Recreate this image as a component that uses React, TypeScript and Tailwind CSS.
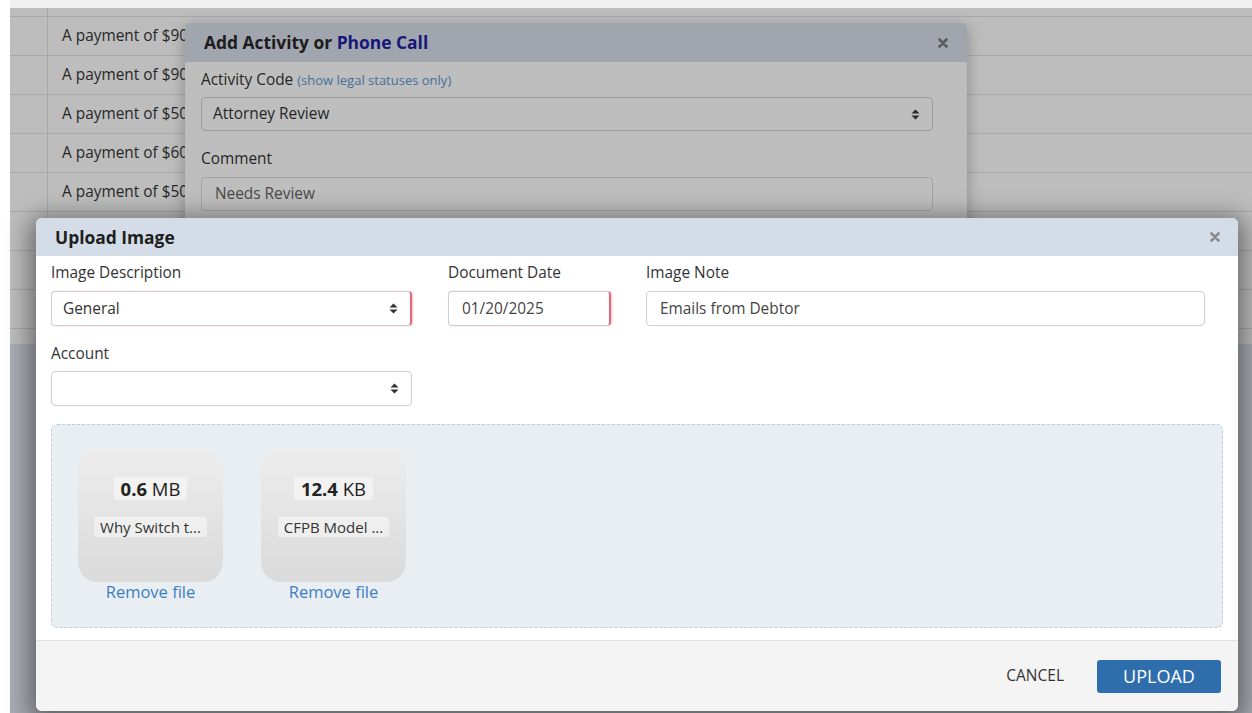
import React from 'react';

// rows further down sit behind the upload dialog, so they carry no text
const payments = ['$900.00', '$900.00', '$500.00', '$600.00', '$500.00', '', '', ''];

const files = [
  { size: '0.6', unit: 'MB', name: 'Why Switch t...' },
  { size: '12.4', unit: 'KB', name: 'CFPB Model ...' },
];

function SortArrows({ color = '#333' }: { color?: string }) {
  return (
    <svg width="9" height="11" viewBox="0 0 9 11" className="shrink-0">
      <path d="M4.5 0.5 L8.5 4.5 H0.5 Z" fill={color} />
      <path d="M0.5 6.5 H8.5 L4.5 10.5 Z" fill={color} />
    </svg>
  );
}

function CloseX({ color }: { color: string }) {
  return (
    <svg width="10" height="10" viewBox="0 0 10 10" className="shrink-0">
      <path d="M1.5 1.5 L8.5 8.5 M8.5 1.5 L1.5 8.5" stroke={color} strokeWidth="2.6" strokeLinecap="round" />
    </svg>
  );
}

function PaymentTable() {
  return (
    <div className="ml-[10px] flex h-full flex-col">
      <div className="h-[8px] bg-[#efefef]" />
      <div className="bg-[#bdbdbd] text-[#282828]">
        <div className="flex h-[9px] border-b border-[#a8a8a8]">
          <div className="w-[38px] border-r border-[#a8a8a8]" />
        </div>
        {payments.map((amt, i) => (
          <div key={i} className="flex h-[39px] border-b border-[#a8a8a8]">
            <div className="w-[38px] border-r border-[#a8a8a8]" />
            {amt && (
              <div className="w-[137px] overflow-hidden whitespace-nowrap pl-[14px] leading-[38px]">
                A payment of {amt} was applied
              </div>
            )}
          </div>
        ))}
        <div className="flex h-[15px]">
          <div className="w-[38px] border-r border-[#a8a8a8]" />
        </div>
      </div>
      <div className="flex-1 bg-[#a8acb3]" />
    </div>
  );
}

function ActivityModal() {
  return (
    <div className="absolute left-[185px] top-[23px] h-[380px] w-[782px] rounded-[5px] bg-[#bebebe] shadow-[0_4px_16px_rgba(0,0,0,0.28)]">
      <div className="flex h-[39px] items-center justify-between rounded-t-[5px] bg-[#a1a5ae] pl-[19px] pr-[19px]">
        <h3 className="text-[17.4px] font-bold text-[#1c1c1c]">
          Add Activity or <span className="text-[#17177a]">Phone Call</span>
        </h3>
        <CloseX color="#5a5a5a" />
      </div>
      <div className="pl-[16px] pr-[34px] pt-[8px] text-[#262626]">
        <div className="leading-[20px]">
          Activity Code <span className="text-[13px] text-[#44709c]">(show legal statuses only)</span>
        </div>
        <div className="mt-[7px] flex h-[34px] items-center justify-between rounded-[4px] border border-[#9c9c9c] pl-[11px] pr-[12px]">
          <span>Attorney Review</span>
          <SortArrows color="#2a2a2a" />
        </div>
        <div className="mt-[18px] leading-[20px]">Comment</div>
        <div className="mt-[8px] flex h-[34px] items-center rounded-[4px] border border-[#a3a3a3] pl-[13px] text-[#4a4a4a]">
          Needs Review
        </div>
      </div>
    </div>
  );
}

function FilePreview({ size, unit, name }: { size: string; unit: string; name: string }) {
  return (
    <div className="flex w-[145px] flex-col items-center">
      <div className="flex h-[134px] w-full flex-col items-center rounded-[20px] bg-gradient-to-b from-[#ededed] to-[#dadada] pt-[29px]">
        <div className="h-[23px] rounded-[2px] bg-white/45 px-[7px] text-[18.5px] leading-[23px] text-[#222]">
          <span className="font-bold">{size}</span> {unit}
        </div>
        <div className="mt-[17px] h-[20px] rounded-[2px] bg-white/45 px-[6px] text-[15px] leading-[20px] text-[#333]">
          {name}
        </div>
      </div>
      <a className="cursor-pointer text-[16.5px] leading-[20px] text-[#3d7dc4]">Remove file</a>
    </div>
  );
}

function UploadModal() {
  return (
    <div className="absolute left-[36px] top-[218px] flex h-[493px] w-[1202px] flex-col overflow-hidden rounded-[6px] bg-white shadow-[0_5px_24px_6px_rgba(0,0,0,0.45)]">
      <div className="flex h-[38px] shrink-0 items-center justify-between bg-[#d4dde7] pl-[19px] pr-[18px]">
        <h3 className="text-[17.4px] font-bold text-[#1e1e1e]">Upload Image</h3>
        <CloseX color="#8a8a8a" />
      </div>

      <div className="flex-1 px-[15px] pt-[7px] text-[#333]">
        <div className="flex">
          <div className="w-[361px]">
            <label className="block leading-[20px]">Image Description</label>
            <div className="mt-[8px] flex h-[35px] items-center justify-between rounded-[4px] border border-[#cfcfcf] border-r-2 border-r-[#e4687b] pl-[11px] pr-[12px] shadow-[1px_0_2px_rgba(228,104,123,0.4)]">
              <span>General</span>
              <SortArrows />
            </div>
          </div>
          <div className="ml-[36px] w-[163px]">
            <label className="block leading-[20px]">Document Date</label>
            <div className="mt-[8px] flex h-[35px] items-center rounded-[4px] border border-[#cfcfcf] border-r-2 border-r-[#e4687b] pl-[13px] text-[#444] shadow-[1px_0_2px_rgba(228,104,123,0.4)]">
              01/20/2025
            </div>
          </div>
          <div className="ml-[35px] w-[559px]">
            <label className="block leading-[20px]">Image Note</label>
            <div className="mt-[8px] flex h-[35px] items-center rounded-[4px] border border-[#cfcfcf] pl-[13px] text-[#444]">
              Emails from Debtor
            </div>
          </div>
        </div>

        <div className="mt-[18px] w-[361px]">
          <label className="block leading-[20px]">Account</label>
          <div className="mt-[7px] flex h-[35px] items-center justify-end rounded-[4px] border border-[#cfcfcf] pr-[12px]">
            <SortArrows />
          </div>
        </div>

        <div className="mt-[18px] flex h-[204px] gap-[38px] rounded-[6px] border border-dashed border-[#c6cdd4] bg-[#e9eef3] pl-[26px] pt-[23px]">
          {files.map((f) => (
            <FilePreview key={f.name} {...f} />
          ))}
        </div>
      </div>

      <div className="flex h-[71px] shrink-0 items-center justify-end border-t border-[#e2e2e2] bg-[#f4f4f4] pr-[17px]">
        <button className="mr-[17px] px-[16px] text-[15.5px] text-[#333]">CANCEL</button>
        <button className="h-[33px] w-[124px] rounded-[3px] bg-[#2f6ead] text-[18px] text-white">UPLOAD</button>
      </div>
    </div>
  );
}

export default function App() {
  return (
    <div className="relative h-[713px] w-[1252px] overflow-hidden bg-white font-['Open_Sans',sans-serif] text-[15.4px]">
      <PaymentTable />
      <ActivityModal />
      <UploadModal />
    </div>
  );
}
